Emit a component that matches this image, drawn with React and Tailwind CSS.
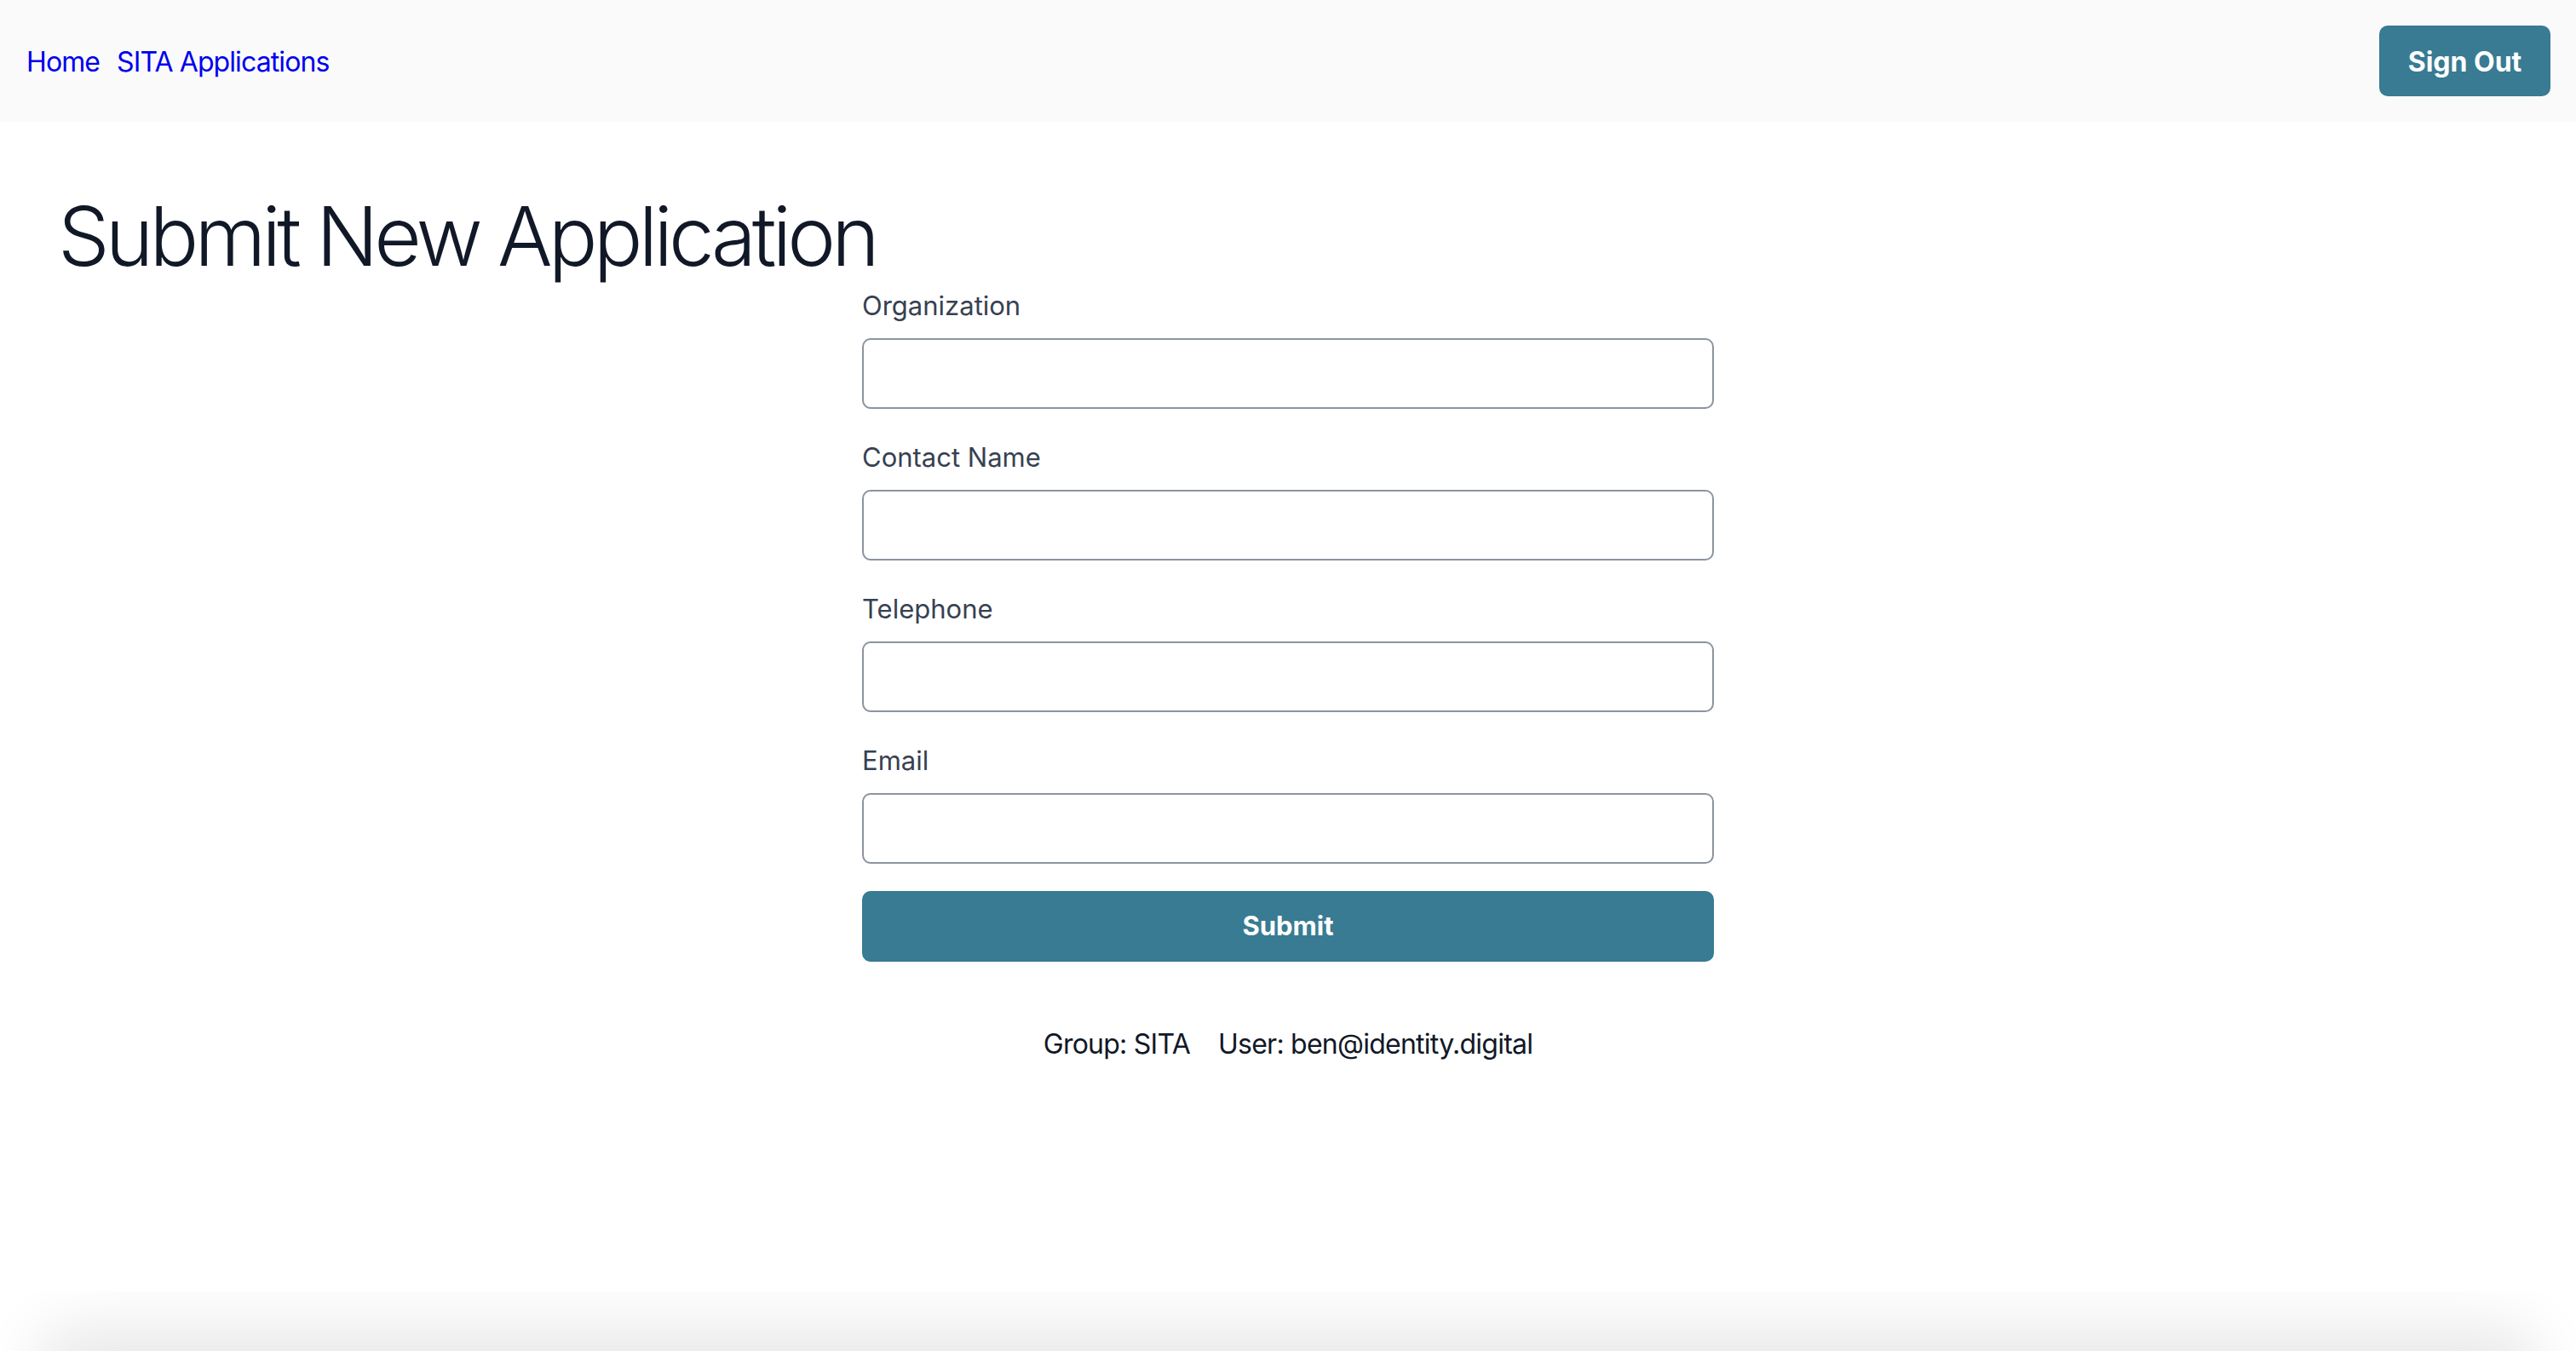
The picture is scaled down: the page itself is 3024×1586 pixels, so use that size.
import React from 'react'

const fields = ['Organization', 'Contact Name', 'Telephone', 'Email']

export default function App() {
  return (
    <div className="min-h-[1586px] flex flex-col bg-white font-['Inter',sans-serif]">
      {/* ── Header ── */}
      <header className="h-[143px] bg-[#fafafa] flex items-center justify-between pl-[31px] pr-[30px]">
        <nav className="pt-[3px] flex items-center gap-[20px] text-[32px] leading-[48px] tracking-[-0.9px] text-[#0000ee]">
          <a href="#">Home</a>
          <a href="#">SITA Applications</a>
        </nav>
        <button className="w-[201px] h-[83px] pt-[2px] rounded-[10px] bg-[#387b92] text-white text-[32px] font-bold">
          Sign Out
        </button>
      </header>

      {/* ── Title ── */}
      <h1 className="mt-[86px] pl-[68px] text-[96px] leading-[96px] font-light tracking-[-4.8px] text-[#111827]">
        Submit New Application
      </h1>

      {/* ── Form ── */}
      <form className="mt-[14px] w-[1000px] mx-auto flex flex-col">
        {fields.map((label) => (
          <div key={label} className="flex flex-col mb-[37px]">
            <label className="text-[31px] leading-[40px] text-[#374151]">{label}</label>
            <input
              type="text"
              className="mt-[18px] h-[83px] rounded-[10px] border-2 border-[#8c949e] bg-white px-4"
            />
          </div>
        ))}
        <button
          type="button"
          className="-mt-[5px] h-[83px] rounded-[10px] bg-[#387b92] text-white text-[31px] font-bold"
        >
          Submit
        </button>
      </form>

      {/* ── Footer info ── */}
      <div className="mt-[73px] flex justify-center gap-[33px] text-[32px] leading-[48px] tracking-[-0.75px] text-[#111827]">
        <span>Group: SITA</span>
        <span>User: ben@identity.digital</span>
      </div>

      <div className="flex-1" />

      {/* window shadow at bottom edge */}
      <div className="h-[70px] overflow-hidden">
        <div className="mt-[70px] h-[40px] mx-[70px] rounded-[40px] shadow-[0_0_70px_30px_rgba(0,0,0,0.09)]" />
      </div>
    </div>
  )
}
